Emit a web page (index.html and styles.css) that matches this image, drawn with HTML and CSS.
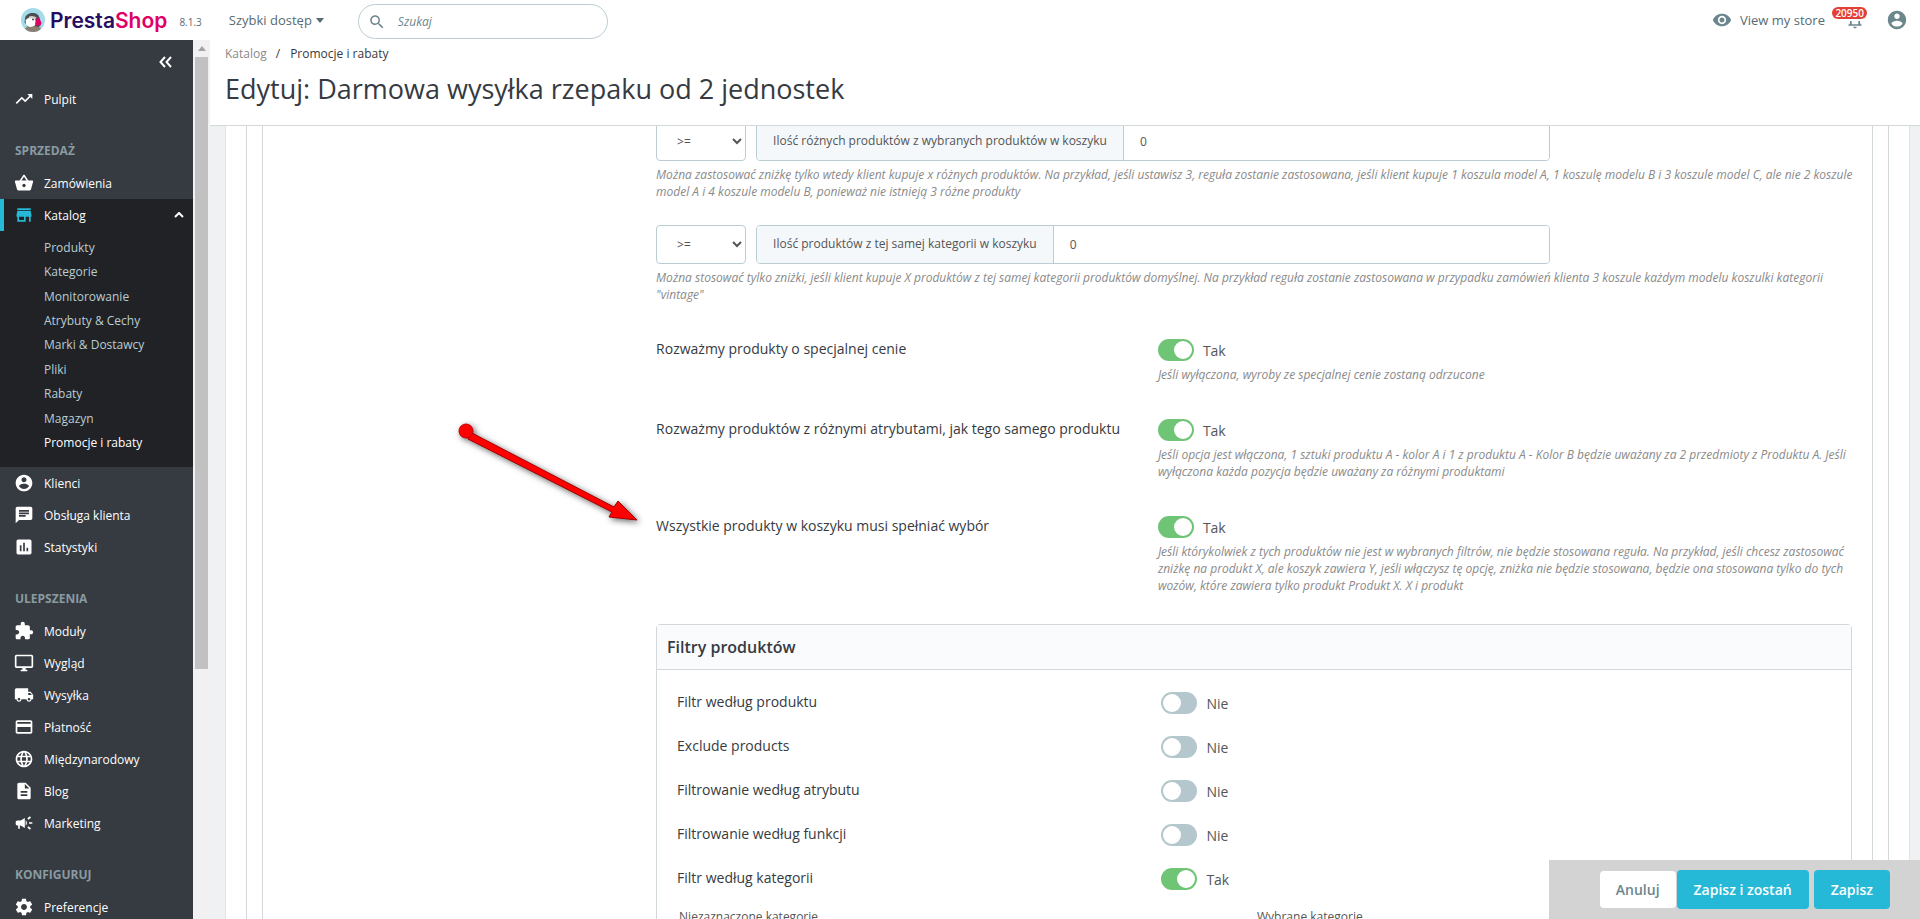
FILE: index.html
```html
<!DOCTYPE html>
<html lang="pl">
<head>
    <meta charset="UTF-8">
    <meta name="viewport" content="width=device-width, initial-scale=1.0">
    <title>Promocje i rabaty • PrestaShop</title>
    <link rel="stylesheet" href="styles.css">
</head>
<body>
    <header class="header">
        <a class="logo" href="#">
            <svg class="logo-mark" viewBox="0 0 24 24" aria-hidden="true">
                <clipPath id="mark"><circle cx="12" cy="12" r="12"/></clipPath>
                <g clip-path="url(#mark)">
                    <rect width="24" height="24" fill="#a4dbe8"/>
                    <path d="M4 11C4 7 8 4.500 12.500 5S19 8 18.500 13L18 20H7L3.500 14Z" fill="#4a4f52"/>
                    <path d="M4 20Q12 16 20 20L18 24H5Z" fill="#8a7d72"/>
                    <path d="M4.500 12Q8 8.500 13 10Q16 13 14.500 17Q9 21 5 17Z" fill="#fff"/>
                    <path d="M8 8.500Q12 7 15.500 9.500L14 11.500Q11 9.500 8 10.500Z" fill="#d8cfc5"/>
                    <path d="M15 12L18 9L20.500 15L19 18.500L17 17L14.500 18Q13.500 15 15 12Z" fill="#df0067"/>
                    <circle cx="12" cy="11.500" r="1" fill="#4a4f52"/>
                </g>
            </svg>
            <span class="logo-text">Presta<span class="logo-pink">Shop</span></span>
        </a>
        <span class="version">8.1.3</span>
        <button class="quick" type="button">Szybki dostęp <span class="caret"></span></button>
        <form class="search" action="#">
            <svg class="icon" viewBox="0 0 24 24" aria-hidden="true"><path d="M15.5 14h-.79l-.28-.27C15.410 12.590 16 11.110 16 9.500 16 5.910 13.090 3 9.500 3S3 5.910 3 9.500 5.910 16 9.500 16c1.610 0 3.090-.59 4.230-1.570l.27.28v.79l5 4.990L20.490 19l-4.990-5zm-6 0C7.010 14 5 11.990 5 9.500S7.010 5 9.500 5 14 7.010 14 9.500 11.990 14 9.500 14z"/></svg>
            <input type="search" class="search-input" placeholder="Szukaj" aria-label="Szukaj">
        </form>
        <a class="store" href="#">
            <svg class="icon" viewBox="0 0 24 24" aria-hidden="true"><path d="M12 4.500C7 4.500 2.730 7.610 1 12c1.730 4.390 6 7.500 11 7.500s9.270-3.110 11-7.500c-1.730-4.390-6-7.500-11-7.500zM12 17c-2.760 0-5-2.240-5-5s2.240-5 5-5 5 2.240 5 5-2.240 5-5 5zm0-8c-1.660 0-3 1.340-3 3s1.340 3 3 3 3-1.340 3-3-1.340-3-3-3z"/></svg>
            View my store
        </a>
        <button class="bell" type="button" aria-label="Powiadomienia">
            <svg class="icon" viewBox="0 0 24 24" aria-hidden="true"><path d="M12 22c1.100 0 2-.9 2-2h-4c0 1.100.9 2 2 2zm6-6v-5c0-3.070-1.630-5.640-4.500-6.320V4c0-.83-.67-1.500-1.500-1.500s-1.500.67-1.500 1.500v.68C7.640 5.360 6 7.920 6 11v5l-2 2v1h16v-1l-2-2zm-2 1H8v-6c0-2.480 1.510-4.500 4-4.500s4 2.020 4 4.500v6z"/></svg>
            <span class="badge">20950</span>
        </button>
        <button class="avatar" type="button" aria-label="Konto">
            <svg class="icon" viewBox="0 0 24 24" aria-hidden="true"><path d="M12 2C6.480 2 2 6.480 2 12s4.480 10 10 10 10-4.480 10-10S17.520 2 12 2zm0 3c1.660 0 3 1.340 3 3s-1.340 3-3 3-3-1.340-3-3 1.340-3 3-3zm0 14.200c-2.500 0-4.710-1.280-6-3.220.03-1.990 4-3.080 6-3.080 1.990 0 5.970 1.090 6 3.080-1.290 1.940-3.500 3.220-6 3.220z"/></svg>
        </button>
    </header>

    <div class="layout">
        <nav class="sidebar">
            <button class="collapse" type="button" aria-label="Zwiń menu">
                <svg viewBox="0 0 14 12" aria-hidden="true"><path d="M6 1L1.500 6L6 11M12 1L7.500 6L12 11"/></svg>
            </button>
            <ul class="menu">
                <li class="item"><a href="#"><svg class="icon" viewBox="0 0 24 24"><path d="M16 6l2.290 2.290-4.880 4.880-4-4L2 16.590 3.410 18l6-6 4 4 6.300-6.290L22 12V6z"/></svg>Pulpit</a></li>
                <li class="section">SPRZEDAŻ</li>
                <li class="item"><a href="#"><svg class="icon" viewBox="0 0 24 24"><path d="M17.210 9l-4.380-6.560c-.19-.28-.51-.42-.83-.42-.32 0-.64.14-.83.430L6.790 9H2c-.55 0-1 .45-1 1 0 .09.010.18.040.27l2.540 9.270c.23.840 1 1.460 1.920 1.460h13c.92 0 1.690-.62 1.930-1.460l2.540-9.270L23 10c0-.55-.45-1-1-1h-4.790zM9 9l3-4.400L15 9H9zm3 8c-1.100 0-2-.9-2-2s.9-2 2-2 2 .9 2 2-.9 2-2 2z"/></svg>Zamówienia</a></li>
                <li class="item active">
                    <a href="#"><svg class="icon" viewBox="0 0 24 24"><path d="M20 4H4v2h16V4zm1 10v-2l-1-5H4l-1 5v2h1v6h10v-6h4v6h2v-6h1zm-9 4H6v-4h6v4z"/></svg>Katalog<svg class="chevron" viewBox="0 0 10 6"><path d="M1 5L5 1L9 5"/></svg></a>
                    <ul class="submenu">
                        <li><a href="#">Produkty</a></li>
                        <li><a href="#">Kategorie</a></li>
                        <li><a href="#">Monitorowanie</a></li>
                        <li><a href="#">Atrybuty &amp; Cechy</a></li>
                        <li><a href="#">Marki &amp; Dostawcy</a></li>
                        <li><a href="#">Pliki</a></li>
                        <li><a href="#">Rabaty</a></li>
                        <li><a href="#">Magazyn</a></li>
                        <li><a class="current" href="#">Promocje i rabaty</a></li>
                    </ul>
                </li>
                <li class="item"><a href="#"><svg class="icon" viewBox="0 0 24 24"><path d="M12 2C6.480 2 2 6.480 2 12s4.480 10 10 10 10-4.480 10-10S17.520 2 12 2zm0 3c1.660 0 3 1.340 3 3s-1.340 3-3 3-3-1.340-3-3 1.340-3 3-3zm0 14.200c-2.500 0-4.710-1.280-6-3.220.03-1.990 4-3.080 6-3.080 1.990 0 5.970 1.090 6 3.080-1.290 1.940-3.500 3.220-6 3.220z"/></svg>Klienci</a></li>
                <li class="item"><a href="#"><svg class="icon" viewBox="0 0 24 24"><path d="M20 2H4c-1.100 0-2 .9-2 2v18l4-4h14c1.100 0 2-.9 2-2V4c0-1.100-.9-2-2-2zM6 14v-2h8v2H6zm12-3H6V9h12v2zm0-3H6V6h12v2z"/></svg>Obsługa klienta</a></li>
                <li class="item"><a href="#"><svg class="icon" viewBox="0 0 24 24"><path d="M19 3H5c-1.100 0-2 .9-2 2v14c0 1.100.9 2 2 2h14c1.100 0 2-.9 2-2V5c0-1.100-.9-2-2-2zM9 17H7v-7h2v7zm4 0h-2V7h2v10zm4 0h-2v-4h2v4z"/></svg>Statystyki</a></li>
                <li class="section">ULEPSZENIA</li>
                <li class="item"><a href="#"><svg class="icon" viewBox="0 0 24 24"><path d="M20.500 11H19V7c0-1.100-.9-2-2-2h-4V3.500C13 2.120 11.880 1 10.500 1S8 2.120 8 3.500V5H4c-1.100 0-1.990.9-1.990 2v3.800H3.500c1.490 0 2.700 1.210 2.700 2.700s-1.210 2.700-2.700 2.700H2V20c0 1.100.9 2 2 2h3.800v-1.500c0-1.490 1.210-2.700 2.700-2.700 1.490 0 2.700 1.210 2.700 2.700V22H17c1.100 0 2-.9 2-2v-4h1.500c1.380 0 2.500-1.120 2.500-2.500S21.880 11 20.500 11z"/></svg>Moduły</a></li>
                <li class="item"><a href="#"><svg class="icon" viewBox="0 0 24 24"><path d="M21 2H3c-1.100 0-2 .9-2 2v12c0 1.100.9 2 2 2h7v2H8v2h8v-2h-2v-2h7c1.100 0 2-.9 2-2V4c0-1.100-.9-2-2-2zm0 14H3V4h18v12z"/></svg>Wygląd</a></li>
                <li class="item"><a href="#"><svg class="icon" viewBox="0 0 24 24"><path d="M20 8h-3V4H3c-1.100 0-2 .9-2 2v11h2c0 1.660 1.340 3 3 3s3-1.340 3-3h6c0 1.660 1.340 3 3 3s3-1.340 3-3h2v-5l-3-4zM6 18.500c-.83 0-1.500-.67-1.500-1.500s.67-1.500 1.500-1.500 1.500.67 1.500 1.500-.67 1.500-1.500 1.500zm13.500-9l1.960 2.500H17V9.500h2.500zm-1.500 9c-.83 0-1.500-.67-1.500-1.500s.67-1.500 1.500-1.500 1.500.67 1.500 1.500-.67 1.500-1.500 1.500z"/></svg>Wysyłka</a></li>
                <li class="item"><a href="#"><svg class="icon" viewBox="0 0 24 24"><path d="M20 4H4c-1.110 0-1.990.89-1.990 2L2 18c0 1.110.89 2 2 2h16c1.110 0 2-.89 2-2V6c0-1.110-.89-2-2-2zm0 14H4v-6h16v6zm0-10H4V6h16v2z"/></svg>Płatność</a></li>
                <li class="item"><a href="#"><svg class="icon" viewBox="0 0 24 24"><path d="M11.990 2C6.470 2 2 6.480 2 12s4.470 10 9.990 10C17.520 22 22 17.520 22 12S17.520 2 11.990 2zm6.930 6h-2.950c-.32-1.250-.78-2.450-1.380-3.560 1.840.63 3.370 1.910 4.330 3.560zM12 4.040c.83 1.200 1.480 2.530 1.910 3.960h-3.820c.43-1.430 1.080-2.760 1.910-3.960zM4.260 14C4.100 13.360 4 12.690 4 12s.1-1.360.26-2h3.380c-.08.66-.14 1.320-.14 2s.06 1.340.14 2H4.260zm.82 2h2.950c.32 1.250.78 2.450 1.380 3.560-1.840-.63-3.370-1.900-4.330-3.560zm2.950-8H5.080c.96-1.660 2.490-2.930 4.330-3.560C8.810 5.550 8.350 6.750 8.030 8zM12 19.960c-.83-1.200-1.480-2.530-1.910-3.960h3.820c-.43 1.430-1.080 2.760-1.910 3.960zM14.340 14H9.660c-.09-.66-.16-1.320-.16-2s.07-1.350.16-2h4.680c.09.65.16 1.320.16 2s-.07 1.340-.16 2zm.25 5.560c.6-1.110 1.060-2.310 1.380-3.560h2.950c-.96 1.650-2.490 2.930-4.330 3.560zM16.360 14c.08-.66.14-1.320.14-2s-.06-1.340-.14-2h3.380c.16.64.26 1.310.26 2s-.1 1.360-.26 2h-3.380z"/></svg>Międzynarodowy</a></li>
                <li class="item"><a href="#"><svg class="icon" viewBox="0 0 24 24"><path d="M14 2H6c-1.100 0-1.990.9-1.990 2L4 20c0 1.100.89 2 1.990 2H18c1.100 0 2-.9 2-2V8l-6-6zm2 16H8v-2h8v2zm0-4H8v-2h8v2zm-3-5V3.500L18.500 9H13z"/></svg>Blog</a></li>
                <li class="item"><a href="#"><svg class="icon" viewBox="0 0 24 24"><path d="M18 11v2h4v-2h-4zm-2 6.610c.96.710 2.210 1.650 3.200 2.390.4-.53.8-1.070 1.200-1.600-.99-.74-2.240-1.680-3.200-2.400-.4.540-.8 1.080-1.200 1.610zM20.400 5.600c-.4-.53-.8-1.070-1.200-1.600-.99.740-2.240 1.680-3.200 2.400.4.530.8 1.070 1.200 1.600.96-.72 2.210-1.650 3.200-2.400zM4 9c-1.100 0-2 .9-2 2v2c0 1.100.9 2 2 2h1v4h2v-4h1l5 3V6L8 9H4zm11.500 3c0-1.330-.58-2.530-1.500-3.350v6.690c.92-.81 1.500-2.010 1.500-3.340z"/></svg>Marketing</a></li>
                <li class="section">KONFIGURUJ</li>
                <li class="item"><a href="#"><svg class="icon" viewBox="0 0 24 24"><path d="M19.430 12.980c.04-.32.07-.64.07-.98s-.03-.66-.07-.98l2.110-1.650c.19-.15.24-.42.12-.64l-2-3.460c-.12-.22-.39-.3-.61-.22l-2.490 1c-.52-.4-1.080-.73-1.690-.98l-.38-2.650C14.460 2.180 14.250 2 14 2h-4c-.25 0-.46.18-.49.42l-.38 2.650c-.61.25-1.170.59-1.690.98l-2.490-1c-.23-.09-.49 0-.61.22l-2 3.460c-.13.22-.07.49.12.64l2.110 1.650c-.04.32-.07.65-.07.98s.03.66.07.98l-2.110 1.650c-.19.15-.24.42-.12.64l2 3.460c.12.22.39.3.61.22l2.490-1c.52.4 1.080.73 1.690.98l.38 2.650c.03.24.24.42.49.42h4c.25 0 .46-.18.49-.42l.38-2.650c.61-.25 1.170-.59 1.690-.98l2.490 1c.23.09.49 0 .61-.22l2-3.460c.12-.22.07-.49-.12-.64l-2.110-1.650zM12 15.500c-1.930 0-3.500-1.570-3.500-3.500s1.570-3.500 3.500-3.500 3.500 1.570 3.500 3.500-1.570 3.500-3.500 3.500z"/></svg>Preferencje</a></li>
            </ul>
        </nav>
        <div class="scrollbar">
            <span class="scroll-up"></span>
            <span class="thumb"></span>
        </div>

        <main class="main">
            <div class="toolbar">
                <nav class="breadcrumb"><a href="#">Katalog</a><span class="slash">/</span><a class="here" href="#">Promocje i rabaty</a></nav>
                <h1 class="title">Edytuj: Darmowa wysyłka rzepaku od 2 jednostek</h1>
            </div>

            <div class="content">
                <div class="card">
                    <div class="card-inner">
                        <div class="fields">
                            <div class="rule">
                                <div class="rule-row">
                                    <select class="operator" aria-label="Operator różnych produktów"><option>&gt;=</option></select>
                                    <div class="group">
                                        <label class="addon" for="diff">Ilość różnych produktów z wybranych produktów w koszyku</label>
                                        <input class="amount" id="diff" type="text" value="0">
                                    </div>
                                </div>
                                <p class="help">Można zastosować zniżkę tylko wtedy klient kupuje x różnych produktów. Na przykład, jeśli ustawisz 3, reguła zostanie zastosowana, jeśli klient kupuje 1 koszula model A, 1 koszulę modelu B i 3 koszule model C, ale nie 2 koszule model A i 4 koszule modelu B, ponieważ nie istnieją 3 różne produkty</p>
                            </div>
                            <div class="rule">
                                <div class="rule-row">
                                    <select class="operator" aria-label="Operator tej samej kategorii"><option>&gt;=</option></select>
                                    <div class="group">
                                        <label class="addon" for="same">Ilość produktów z tej samej kategorii w koszyku</label>
                                        <input class="amount" id="same" type="text" value="0">
                                    </div>
                                </div>
                                <p class="help">Można stosować tylko zniżki, jeśli klient kupuje X produktów z tej samej kategorii produktów domyślnej. Na przykład reguła zostanie zastosowana w przypadku zamówień klienta 3 koszule każdym modelu koszulki kategorii "vintage"</p>
                            </div>

                            <div class="option">
                                <label class="option-label" for="special">Rozważmy produkty o specjalnej cenie</label>
                                <div>
                                    <div class="toggle"><input class="switch" id="special" type="checkbox" checked><span>Tak</span></div>
                                    <p class="help">Jeśli wyłączona, wyroby ze specjalnej cenie zostaną odrzucone</p>
                                </div>
                            </div>
                            <div class="option">
                                <label class="option-label" for="attrs">Rozważmy produktów z różnymi atrybutami, jak tego samego produktu</label>
                                <div>
                                    <div class="toggle"><input class="switch" id="attrs" type="checkbox" checked><span>Tak</span></div>
                                    <p class="help">Jeśli opcja jest włączona, 1 sztuki produktu A - kolor A i 1 z produktu A - Kolor B będzie uważany za 2 przedmioty z Produktu A. Jeśli wyłączona każda pozycja będzie uważany za różnymi produktami</p>
                                </div>
                            </div>
                            <div class="option">
                                <label class="option-label" for="all">Wszystkie produkty w koszyku musi spełniać wybór</label>
                                <div>
                                    <div class="toggle"><input class="switch" id="all" type="checkbox" checked><span>Tak</span></div>
                                    <p class="help">Jeśli którykolwiek z tych produktów nie jest w wybranych filtrów, nie będzie stosowana reguła. Na przykład, jeśli chcesz zastosować zniżkę na produkt X, ale koszyk zawiera Y, jeśli włączysz tę opcję, zniżka nie będzie stosowana, będzie ona stosowana tylko do tych wozów, które zawiera tylko produkt Produkt X. X i produkt</p>
                                </div>
                            </div>

                            <section class="panel">
                                <h2 class="panel-title">Filtry produktów</h2>
                                <div class="filters">
                                    <div class="filter"><label for="f1">Filtr według produktu</label><div class="toggle"><input class="switch" id="f1" type="checkbox"><span>Nie</span></div></div>
                                    <div class="filter"><label for="f2">Exclude products</label><div class="toggle"><input class="switch" id="f2" type="checkbox"><span>Nie</span></div></div>
                                    <div class="filter"><label for="f3">Filtrowanie według atrybutu</label><div class="toggle"><input class="switch" id="f3" type="checkbox"><span>Nie</span></div></div>
                                    <div class="filter"><label for="f4">Filtrowanie według funkcji</label><div class="toggle"><input class="switch" id="f4" type="checkbox"><span>Nie</span></div></div>
                                    <div class="filter"><label for="f5">Filtr według kategorii</label><div class="toggle"><input class="switch" id="f5" type="checkbox" checked><span>Tak</span></div></div>
                                </div>
                                <div class="lists">
                                    <span>Niezaznaczone kategorie</span>
                                    <span>Wybrane kategorie</span>
                                </div>
                            </section>
                        </div>
                    </div>
                </div>

                <svg class="arrow" viewBox="0 0 190 110" aria-hidden="true">
                    <path d="M10 9L154 84L158 78L177 97L149 94L152 89L8 16Z" fill="#f00" stroke="#a00000" stroke-width="1"/>
                    <circle cx="6" cy="8" r="7" fill="#f00" stroke="#c00000" stroke-width="1"/>
                </svg>
            </div>

            <div class="actions">
                <button class="btn btn-cancel" type="button">Anuluj</button>
                <button class="btn btn-primary" type="submit">Zapisz i zostań</button>
                <button class="btn btn-primary" type="submit">Zapisz</button>
            </div>
        </main>
    </div>
</body>
</html>
```
FILE: styles.css
```css
* {
    box-sizing: border-box;
    margin: 0;
    padding: 0;
}

body {
    height: 100vh;
    overflow: hidden;
    display: flex;
    flex-direction: column;
    font-family: "Open Sans", "Noto Sans", sans-serif;
    font-size: 14px;
    color: #363a41;
    background: #eff1f2;
}

a {
    color: inherit;
    text-decoration: none;
}

ul {
    list-style: none;
}

button,
input,
select {
    font: inherit;
    color: inherit;
}

.icon {
    width: 20px;
    height: 20px;
    fill: currentColor;
    flex: none;
}

/* top bar */
.header {
    display: flex;
    align-items: center;
    height: 40px;
    flex: none;
    padding: 0 12px 0 21px;
    background: #fff;
    color: #576b72;
}

.header .icon {
    color: #6c868e;
}

.logo {
    display: flex;
    align-items: center;
    gap: 5px;
}

.logo-mark {
    width: 24px;
    height: 24px;
}

.logo-text {
    font-family: Inter, sans-serif;
    font-weight: 600;
    font-size: 21px;
    color: #250e62;
}

.logo-pink {
    color: #df0067;
}

.version {
    margin: 4px 27px 0 12px;
    font-size: 10px;
}

.quick {
    display: flex;
    align-items: center;
    gap: 4px;
    border: none;
    background: none;
    font-size: 13px;
}

.caret {
    border: 4px solid transparent;
    border-top: 5px solid currentColor;
    border-bottom: none;
}

.search {
    display: flex;
    align-items: center;
    width: 250px;
    height: 35px;
    margin: 3px auto 0 34px;
    padding: 0 9px;
    border: 1px solid #bbcdd2;
    border-radius: 18px;
}

.search .icon {
    width: 18px;
    height: 18px;
}

.search-input {
    flex: 1;
    min-width: 0;
    margin-left: 12px;
    border: none;
    outline: none;
    background: none;
    font-size: 12px;
}

.search-input::placeholder {
    color: #6c868e;
    font-style: italic;
}

.store {
    display: flex;
    align-items: center;
    gap: 8px;
    font-size: 13px;
}

.bell,
.avatar {
    display: flex;
    border: none;
    background: none;
}

.bell {
    position: relative;
    margin: 0 21px 0 20px;
}

.badge {
    position: absolute;
    top: -3px;
    right: -2px;
    padding: 0 3px;
    border-radius: 8px;
    box-shadow: 0 0 0 2px #fff;
    background: #e23f36;
    color: #fff;
    font-size: 10px;
    line-height: 12px;
    font-weight: 600;
}

.avatar .icon {
    width: 22px;
    height: 22px;
}

.layout {
    flex: 1;
    min-height: 0;
    display: flex;
}

/* left menu */
.sidebar {
    width: 193px;
    flex: none;
    overflow: hidden;
    background: #363a41;
    color: #fff;
    font-size: 12px;
}

.collapse {
    display: block;
    margin: 16px 20px 0 auto;
    border: none;
    background: none;
    color: #fff;
}

.collapse svg {
    display: block;
    width: 14px;
    height: 12px;
    fill: none;
    stroke: currentColor;
    stroke-width: 2;
}

.menu {
    padding-top: 15px;
}

.item > a {
    display: flex;
    align-items: center;
    gap: 10px;
    height: 32px;
    padding: 0 14px;
}

.section {
    padding: 27px 15px 7px;
    line-height: 18px;
    font-weight: 700;
    color: #899ba1;
}

.active {
    background: #202226;
}

.item.active > a {
    padding: 0 9px 0 10px;
    border-left: 4px solid #25b9d7;
}

.active .icon {
    color: #25b9d7;
}

.chevron {
    width: 10px;
    height: 6px;
    margin-left: auto;
    fill: none;
    stroke: #fff;
    stroke-width: 2;
}

.submenu {
    display: flex;
    flex-direction: column;
    min-height: 236px;
    padding: 4px 0 12px 44px;
    color: #bbcdd2;
}

.submenu li {
    flex: 1;
    display: flex;
    align-items: center;
}

.current {
    color: #fff;
}

.scrollbar {
    width: 17px;
    flex: none;
    display: flex;
    flex-direction: column;
    align-items: center;
    background: #f1f1f1;
}

.scroll-up {
    margin: 6px 0;
    border: 4px solid transparent;
    border-top: none;
    border-bottom: 5px solid #a3a3a3;
}

.thumb {
    width: 13px;
    height: 69.6%;
    background: #c1c1c1;
}

.main {
    flex: 1;
    min-width: 0;
    display: flex;
    flex-direction: column;
    position: relative;
}

.toolbar {
    flex: none;
    padding: 6px 15px 18px;
    border-bottom: 1px solid #d3d8db;
    background: #fff;
}

.breadcrumb {
    font-size: 12px;
    line-height: 16px;
}

.breadcrumb a {
    color: #8a8a8a;
}

.breadcrumb .here {
    color: #363a41;
}

.slash {
    margin: 0 10px 0 9px;
}

.title {
    margin-top: 8px;
    font-size: 27px;
    line-height: 37px;
    font-weight: 400;
}

/* form */
.content {
    flex: 1;
    min-height: 0;
    overflow: hidden;
    position: relative;
    padding: 0 10px 0 15px;
}

.card {
    padding: 0 20px;
    border: 1px solid #dbe6e9;
    border-top: none;
    background: #fff;
}

.card-inner {
    padding: 0 15px;
    border: 1px solid #d3d8db;
    border-top: none;
}

.fields {
    padding: 0 20px 0 24.4%;
    border: 1px solid #d3d8db;
    border-top: none;
}

.rule {
    margin-bottom: 25px;
}

/* first row sits partly under the toolbar */
.rule:first-child {
    margin-top: -4px;
}

.rule .help {
    margin-right: -14px;
}

.rule-row {
    display: flex;
    gap: 10px;
}

.operator {
    width: 90px;
    height: 39px;
    padding-left: 16px;
    border: 1px solid #bbcdd2;
    border-radius: 4px;
    background: #fff;
    color: #555;
    font-size: 12px;
}

.group {
    display: flex;
    width: 66.4%;
    border: 1px solid #bbcdd2;
    border-radius: 4px;
    overflow: hidden;
}

.addon {
    padding: 0 16px;
    background: #f4f8fb;
    border-right: 1px solid #bbcdd2;
    color: #555;
    font-size: 12px;
    line-height: 35px;
    white-space: nowrap;
}

.amount {
    flex: 1;
    min-width: 0;
    padding: 0 16px;
    border: none;
    outline: none;
    color: #555;
    font-size: 12px;
}

.help {
    margin-top: 5px;
    font-size: 12px;
    line-height: 17px;
    font-style: italic;
    color: #8a8a8a;
}

.option {
    display: grid;
    grid-template-columns: 5fr 7fr;
    column-gap: 6px;
    margin-bottom: 36px;
}

.rule + .option {
    margin-top: 36px;
}

.option-label {
    line-height: 20px;
}

.toggle {
    display: flex;
    align-items: center;
    gap: 9px;
    height: 22px;
    color: #555;
}

.switch {
    appearance: none;
    width: 36px;
    height: 22px;
    padding: 2px;
    border-radius: 11px;
    background: #b3c7cd;
}

.switch::before {
    content: "";
    display: block;
    width: 18px;
    height: 18px;
    border-radius: 50%;
    background: #fff;
}

.switch:checked {
    background: #70c475;
}

.switch:checked::before {
    margin-left: auto;
}

.panel {
    margin-top: -6px;
    border: 1px solid #d3d8db;
    border-radius: 4px 4px 0 0;
}

.panel-title {
    padding: 0 10px;
    border-bottom: 1px solid #d3d8db;
    background: #fafbfc;
    font-size: 16px;
    line-height: 44px;
    font-weight: 600;
}

.filters {
    display: grid;
    row-gap: 22px;
    padding: 22px 20px 0;
}

.filter {
    display: grid;
    grid-template-columns: 5fr 7fr;
    column-gap: 6px;
}

.filter label {
    line-height: 20px;
}

.lists {
    display: grid;
    grid-template-columns: 1fr 1fr;
    column-gap: 6px;
    padding: 18px 22px;
    color: #555;
    font-size: 12px;
    line-height: 18px;
}

.arrow {
    position: absolute;
    left: 250px;
    top: 297px;
    width: 190px;
    height: 110px;
    overflow: visible;
    filter: drop-shadow(2px 2px 3px rgba(0, 0, 0, 0.6));
}

/* save bar */
.actions {
    position: absolute;
    right: 0;
    bottom: 0;
    display: flex;
    align-items: center;
    height: 59px;
    padding: 0 30px 0 51px;
    background: #d3d3d3;
}

.btn {
    height: 39px;
    padding: 0 17px;
    border: none;
    border-radius: 4px;
    font-weight: 600;
    cursor: pointer;
}

.btn-cancel {
    height: 37px;
    margin-right: 1px;
    padding: 0 16px;
    background: #fff;
    color: #6c868e;
}

.btn-primary {
    background: #25b9d7;
    color: #fff;
}

.btn-primary + .btn-primary {
    margin-left: 5px;
}
```
